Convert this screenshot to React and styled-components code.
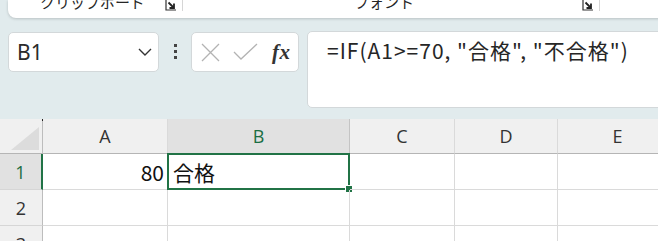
import React from 'react';
import styled, { createGlobalStyle } from 'styled-components';

const GlobalStyle = createGlobalStyle`
  html, body {
    margin: 0;
    padding: 0;
    background: #e1ebed;
    overflow: hidden;
  }
  body {
    font-family: "Noto Sans", "Noto Sans CJK JP", sans-serif;
    color: #262626;
  }
`;

const Page = styled.div`
  width: 658px;
  height: 241px;
  display: flex;
  flex-direction: column;
  overflow: hidden;

  & > * {
    flex-shrink: 0;
  }
`;

const Ribbon = styled.div`
  height: 18px;
  margin-left: 8px;
  margin-right: -20px;
  background: #ffffff;
  border-radius: 0 0 0 8px;
  box-shadow: 0 1px 3px rgba(0, 0, 0, 0.18);
  display: flex;
  overflow: hidden;
`;

const Group = styled.div`
  width: ${(p) => p.$width}px;
  position: relative;
  display: flex;
  align-items: flex-start;
  border-right: 1px solid #d6d6d6;
  height: 11px;
`;

const GroupLabel = styled.div`
  font-family: "Noto Sans CJK JP", sans-serif;
  font-size: 15px;
  line-height: 15px;
  margin-top: -6px;
  padding-left: ${(p) => p.$left}px;
  color: #262626;
  white-space: nowrap;
`;

const Launcher = styled.svg`
  position: absolute;
  right: 5px;
  top: 0;
`;

const FormulaRow = styled.div`
  display: flex;
  align-items: flex-start;
  padding-left: 8px;
  margin-top: 13px;
`;

const NameBox = styled.div`
  width: 151px;
  height: 40px;
  margin-top: 1px;
  box-sizing: border-box;
  background: #fff;
  border: 1px solid #d3d8da;
  border-radius: 5px;
  display: flex;
  align-items: center;
  justify-content: space-between;
  padding: 0 6px 0 8px;
  font-family: "Noto Sans", sans-serif;
  font-size: 21px;
  color: #2b2b2b;
`;

const Dots = styled.div`
  width: 32px;
  display: flex;
  flex-direction: column;
  align-items: center;
  gap: 3px;
  padding-top: 13px;
  span {
    width: 3px;
    height: 3px;
    background: #444;
  }
`;

const ButtonBox = styled.div`
  width: 108px;
  height: 40px;
  margin-top: 1px;
  box-sizing: border-box;
  background: #fff;
  border: 1px solid #d3d8da;
  border-radius: 5px;
  display: flex;
  align-items: center;
  padding-left: 9px;
`;

const Fx = styled.span`
  font-family: "Liberation Serif", serif;
  font-style: italic;
  font-weight: bold;
  font-size: 21px;
  color: #333;
  margin-left: 14px;
  letter-spacing: 0.5px;
`;

const FormulaBar = styled.div`
  margin-left: 8px;
  flex: 1;
  margin-right: -20px;
  height: 77px;
  box-sizing: border-box;
  background: #fff;
  border: 1px solid #d3d8da;
  border-radius: 5px;
  padding: 4px 0 0 19px;
  font-family: "Noto Sans CJK JP", sans-serif;
  font-size: 21px;
  letter-spacing: 1px;
  line-height: 28px;
  color: #262626;
  white-space: nowrap;
`;

const Grid = styled.div`
  margin-top: 11px;
  display: grid;
  grid-template-columns: 43px 125px 182px 105px 103px 120px;
  grid-template-rows: 35px 36px 36px 36px;
  background: #fff;
`;

const ColHead = styled.div`
  background: ${(p) => (p.$active ? '#e1e1e1' : '#f0f0f0')};
  border-right: 1px solid ${(p) => (p.$active ? '#c4c4c4' : '#dadada')};
  border-bottom: 1px solid #b5b5b5;
  display: flex;
  align-items: center;
  justify-content: center;
  font-family: "Open Sans", sans-serif;
  font-size: 18px;
  color: ${(p) => (p.$active ? '#1b6e43' : '#333')};
`;

const Corner = styled.div`
  background: #f0f0f0;
  border-right: 1px solid #bdbdbd;
  border-bottom: 1px solid #b5b5b5;
  position: relative;
  &::after {
    content: '';
    position: absolute;
    right: 3px;
    bottom: 3px;
    width: 0;
    height: 0;
    border-left: 28px solid transparent;
    border-bottom: 23px solid #dcdcdc;
  }
  &::before {
    content: '';
    position: absolute;
    right: -1px;
    top: 0;
    width: 1px;
    height: 2px;
    background: #222;
  }
`;

const RowHead = styled.div`
  background: ${(p) => (p.$active ? '#e1e1e1' : '#f0f0f0')};
  border-right: ${(p) => (p.$active ? '2px solid #217346' : '1px solid #bdbdbd')};
  border-bottom: 1px solid #d6d6d6;
  display: flex;
  align-items: center;
  justify-content: center;
  font-family: "Open Sans", sans-serif;
  font-size: 18px;
  color: ${(p) => (p.$active ? '#1b6e43' : '#333')};
`;

const Cell = styled.div`
  border-right: 1px solid #dadada;
  border-bottom: 1px solid #dadada;
  display: flex;
  align-items: center;
  justify-content: ${(p) => (p.$right ? 'flex-end' : 'flex-start')};
  padding: 0 3px;
  font-family: "Noto Sans CJK JP", sans-serif;
  font-size: 21px;
  color: #111;
  position: relative;
`;

const Selected = styled(Cell)`
  border: 2px solid #217346;
  margin: -1px 0 0 -1px;
  padding-left: 4px;
  &::after {
    content: '';
    position: absolute;
    right: -5px;
    bottom: -5px;
    width: 6px;
    height: 6px;
    background: #217346;
    border: 1px solid #fff;
  }
`;

const LauncherIcon = () => (
  <Launcher width="12" height="11" viewBox="0 0 12 11">
    <path d="M1 0 V10 H11" fill="none" stroke="#333" strokeWidth="1.2" />
    <path d="M3.5 2.5 L9 8 M9 3.5 V8 H4.5" fill="none" stroke="#222" strokeWidth="1.8" />
  </Launcher>
);

const cols = ['A', 'B', 'C', 'D', 'E'];

export default function App() {
  return (
    <Page>
      <GlobalStyle />
      <Ribbon>
        <Group $width={174}>
          <GroupLabel $left={32}>クリップボード</GroupLabel>
          <LauncherIcon />
        </Group>
        <Group $width={416}>
          <GroupLabel $left={171}>フォント</GroupLabel>
          <LauncherIcon />
        </Group>
      </Ribbon>

      <FormulaRow>
        <NameBox>
          <span>B1</span>
          <svg width="14" height="8" viewBox="0 0 14 8">
            <path d="M1 1 L7 7 L13 1" fill="none" stroke="#333" strokeWidth="1.4" />
          </svg>
        </NameBox>
        <Dots>
          <span />
          <span />
          <span />
        </Dots>
        <ButtonBox>
          <svg width="19" height="19" viewBox="0 0 19 19">
            <path d="M1 1 L18 18 M18 1 L1 18" stroke="#b3b3b3" strokeWidth="1.3" />
          </svg>
          <svg width="25" height="18" viewBox="0 0 25 18" style={{ marginLeft: 13 }}>
            <path d="M1 9 L8 16 L24 1" fill="none" stroke="#b3b3b3" strokeWidth="1.3" />
          </svg>
          <Fx>fx</Fx>
        </ButtonBox>
        <FormulaBar>=IF(A1&gt;=70, "合格", "不合格")</FormulaBar>
      </FormulaRow>

      <Grid>
        <Corner />
        {cols.map((c) => (
          <ColHead key={c} $active={c === 'B'}>
            {c}
          </ColHead>
        ))}

        <RowHead $active>1</RowHead>
        <Cell $right>80</Cell>
        <Selected>合格</Selected>
        <Cell />
        <Cell />
        <Cell />

        {[2, 3].map((r) => (
          <React.Fragment key={r}>
            <RowHead>{r}</RowHead>
            <Cell />
            <Cell />
            <Cell />
            <Cell />
            <Cell />
          </React.Fragment>
        ))}
      </Grid>
    </Page>
  );
}
